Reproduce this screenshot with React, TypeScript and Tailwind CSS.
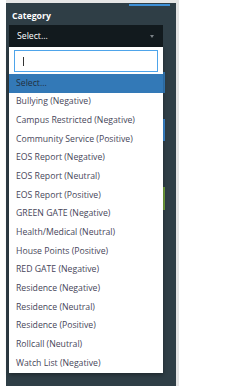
import React from "react";

const items = [
  "Bullying (Negative)",
  "Campus Restricted (Negative)",
  "Community Service (Positive)",
  "EOS Report (Negative)",
  "EOS Report (Neutral)",
  "EOS Report (Positive)",
  "GREEN GATE (Negative)",
  "Health/Medical (Neutral)",
  "House Points (Positive)",
  "RED GATE (Negative)",
  "Residence (Negative)",
  "Residence (Neutral)",
  "Residence (Positive)",
  "Rollcall (Neutral)",
  "Watch List (Negative)",
];

export default function App() {
  return (
    <div
      className="w-[250px] h-[386px] bg-white flex overflow-hidden"
      style={{ fontFamily: '"Open Sans", "Noto Sans", sans-serif' }}
    >
      <div className="w-[6px] shrink-0" />
      <div className="w-[170px] shrink-0 flex flex-col">
        <div className="h-[3px] bg-[#e6e6e6] shrink-0" />
        <div className="relative flex-1 bg-[#2f3e46] flex flex-col">
          <div className="flex justify-end pr-[6px] mt-[1px]">
            <div className="w-[41px] h-[2px] bg-[#3d8fd6]" />
          </div>
          <div className="pl-[6px] mt-[4px] h-[12px] leading-[12px] text-[8.7px] font-bold text-white">
            Category
          </div>
          <div className="ml-[3px] mt-[3px] w-[154px] h-[22px] bg-[#121a1e] flex items-center justify-between pl-[8px] pr-[9px]">
            <span className="text-[8.7px] text-white leading-none">Select...</span>
            <span className="w-0 h-0 border-l-[2.5px] border-r-[2.5px] border-t-[3px] border-l-transparent border-r-transparent border-t-[#7b8287]" />
          </div>
          {/* background elements peeking out beside the dropdown */}
          <div className="ml-[3px] mt-[25px] w-[156px] h-[21px] bg-[#3379b7]" />
          <div className="ml-[3px] mt-[26px] w-[156px] h-[22px] bg-[#3a86d0]" />
          <div className="ml-[3px] mt-[46px] w-[156px] h-[23px] bg-[#6f9d3c]" />

          <div className="absolute left-[3px] top-[44px] w-[154px] h-[326px] bg-white shadow-[0_2px_4px_rgba(0,0,0,0.35)] flex flex-col">
            <div className="pt-[3px] pb-[2px] px-[5px]">
              <div className="h-[22px] border border-[#4ea4ea] bg-white flex items-center pl-[8px]">
                <div className="w-[1px] h-[9px] bg-[#333]" />
              </div>
            </div>
            <div className="h-[18.67px] bg-[#3379b7] flex items-center pl-[7px] text-[8.7px] text-[#22303f]">
              Select...
            </div>
            {items.map((t) => (
              <div
                key={t}
                className="h-[18.67px] flex items-center pl-[7px] text-[8.7px] text-[#47465a] whitespace-nowrap"
              >
                {t}
              </div>
            ))}
          </div>
        </div>
      </div>
      <div className="w-[3px] shrink-0 bg-[#e4e4e4]" />
      <div className="flex-1" />
    </div>
  );
}
